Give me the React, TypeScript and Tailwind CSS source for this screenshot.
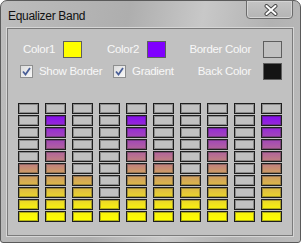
const LEVELS = [5, 9, 4, 2, 9, 6, 4, 8, 1, 9]
const ROWS = 10

// Color2 (purple) at top, Color1 (yellow) at bottom
const mix = (t: number) => {
  const c = Math.max(0, Math.min(1, t))
  const r = Math.round(128 + 127 * c)
  const g = Math.round(255 * c)
  const b = Math.round(255 - 255 * c)
  return `rgb(${r},${g},${b})`
}

function Cell({ row, on }: { row: number; on: boolean }) {
  const style = on
    ? {
        background: `linear-gradient(to bottom, ${mix((row - 0.5) / 9)}, ${mix((row + 0.5) / 9)})`,
      }
    : undefined
  return (
    <div
      className="w-[21px] h-[11px] border border-[#1e1e1e] shadow-[inset_0_0_0_1px_rgba(40,40,40,0.35)] bg-[#c1c1c1]"
      style={style}
    />
  )
}

function Swatch({ color }: { color: string }) {
  return <div className={`w-[19px] h-[17px] border border-[#5e5e5e] ${color}`} />
}

function Check({ label }: { label: string }) {
  return (
    <div className="flex items-center">
      <div className="w-[13px] h-[13px] border border-[#8e8f8f] bg-[linear-gradient(135deg,#dcdcdc,#f8f8f8)] flex items-center justify-center">
        <svg width="9" height="9" viewBox="0 0 9 9">
          <path d="M1 4.5 L3.5 7.5 L8 1" fill="none" stroke="#4a5f97" strokeWidth="1.8" />
        </svg>
      </div>
      <span className="ml-[6px]">{label}</span>
    </div>
  )
}

export default function App() {
  return (
    <div
      className="w-[301px] h-[243px] flex flex-col rounded-t-[7px] rounded-b-[3px] border border-[#5a5a5a] bg-[linear-gradient(100deg,#bdbdbd_0%,#b3b3b3_25%,#aeaeae_38%,#c8c8c8_60%,#b2b2b2_80%,#bcbcbc_100%)] text-[12px] tracking-[-0.3px]"
      style={{ fontFamily: '"Liberation Sans", Arial, sans-serif' }}
    >
      {/* Title bar */}
      <div className="h-[27px] flex items-start justify-between">
        <div className="pt-[6px] pl-[7px] text-[#111]">Equalizer Band</div>
        <div className="mr-[7px] w-[47px] h-[19px] -mt-px rounded-b-[4px] border border-[#6b6b6b] shadow-[inset_0_0_0_1px_#d4d4d4] bg-[linear-gradient(to_bottom,#c4c4c4,#b4b4b4)] flex items-center justify-center">
          <svg width="14" height="12" viewBox="0 0 14 12" className="ml-[3px]">
            <path d="M2.5 2 L11.5 10 M11.5 2 L2.5 10" stroke="#4a4a4a" strokeWidth="4" strokeLinecap="round" />
            <path d="M2.5 2 L11.5 10 M11.5 2 L2.5 10" stroke="#ffffff" strokeWidth="2" strokeLinecap="round" />
          </svg>
        </div>
      </div>

      {/* Client area */}
      <div className="ml-[6px] w-[286px] h-[208px] border border-[#7b7b7b] shadow-[0_0_0_1px_#d6d6d6] bg-[#c1c1c1] text-[#f8f8f8] text-[11.5px]">
        <div className="pt-[12px] pr-[10px] flex flex-col gap-[5px]">
          <div className="h-[17px] flex items-center">
            <span className="pl-[15px] w-[55px]">Color1</span>
            <Swatch color="bg-[#ffff00]" />
            <span className="pl-[25px] w-[65px]">Color2</span>
            <Swatch color="bg-[#8000ff]" />
            <span className="ml-auto mr-[12px]">Border Color</span>
            <Swatch color="bg-[#c1c1c1]" />
          </div>
          <div className="h-[17px] flex items-center">
            <div className="pl-[12px] w-[105px]">
              <Check label="Show Border" />
            </div>
            <Check label="Gradient" />
            <span className="ml-auto mr-[12px]">Back Color</span>
            <Swatch color="bg-[#141414]" />
          </div>
        </div>

        <div className="mt-[23px] pl-[10px] grid grid-cols-[repeat(10,21px)] gap-x-[6px] gap-y-px">
          {Array.from({ length: ROWS }, (_, r) =>
            LEVELS.map((lvl, c) => <Cell key={`${r}-${c}`} row={r} on={r >= ROWS - lvl} />)
          )}
        </div>
      </div>
    </div>
  )
}
